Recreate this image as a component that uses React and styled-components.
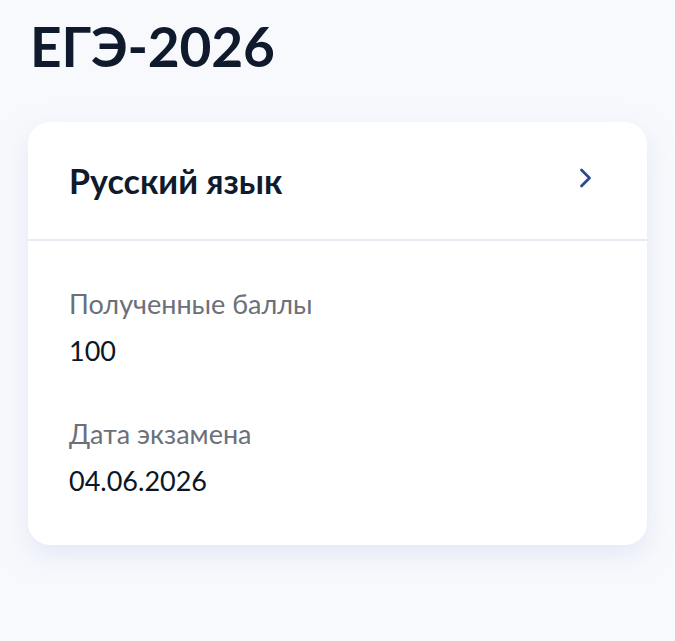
import styled, { createGlobalStyle } from "styled-components";

const GlobalStyle = createGlobalStyle`
  html, body {
    margin: 0;
    padding: 0;
    background: #f8f9fd;
  }
  * {
    box-sizing: border-box;
  }
`;

const Page = styled.main`
  min-height: 641px;
  padding: 12px 28px 0 28px;
  font-family: Lato, "Noto Sans", sans-serif;
  color: #0b1f33;
`;

const Title = styled.h1`
  margin: 0 0 42px 2px;
  font-size: 55px;
  line-height: 68px;
  font-weight: 700;
  letter-spacing: -0.2px;
  color: #0f1b2d;
`;

const Card = styled.section`
  width: 619px;
  background: #ffffff;
  border-radius: 22px;
  box-shadow: 0 10px 24px rgba(210, 218, 240, 0.5);
  overflow: hidden;
`;

const CardHeader = styled.header`
  display: flex;
  align-items: center;
  justify-content: space-between;
  height: 119px;
  padding: 0 54px 0 41px;
  border-bottom: 2px solid #e8ebf1;
`;

const Subject = styled.h2`
  margin: 0;
  font-size: 34px;
  font-weight: 700;
  color: #0f1b2d;
`;

const Chevron = styled.svg`
  width: 15px;
  height: 22px;
  margin-top: -6px;
  color: #2e4a8e;
`;

const CardBody = styled.div`
  display: flex;
  flex-direction: column;
  gap: 49px;
  padding: 46px 41px 47px 41px;
`;

const Field = styled.div`
  display: flex;
  flex-direction: column;
  gap: 13px;
`;

const Label = styled.span`
  font-size: 27px;
  line-height: 34px;
  color: #6c7079;
`;

const Value = styled.span`
  font-size: 27px;
  line-height: 34px;
  color: #0c1625;
`;

const fields = [
  { label: "Полученные баллы", value: "100" },
  { label: "Дата экзамена", value: "04.06.2026" },
];

export default function App() {
  return (
    <>
      <GlobalStyle />
      <Page>
        <Title>ЕГЭ-2026</Title>
        <Card>
          <CardHeader>
            <Subject>Русский язык</Subject>
            <Chevron viewBox="0 0 15 22" fill="none">
              <path
                d="M3.5 3l8 8-8 8"
                stroke="currentColor"
                strokeWidth="2.8"
                strokeLinecap="round"
                strokeLinejoin="round"
              />
            </Chevron>
          </CardHeader>
          <CardBody>
            {fields.map((f) => (
              <Field key={f.label}>
                <Label>{f.label}</Label>
                <Value>{f.value}</Value>
              </Field>
            ))}
          </CardBody>
        </Card>
      </Page>
    </>
  );
}
